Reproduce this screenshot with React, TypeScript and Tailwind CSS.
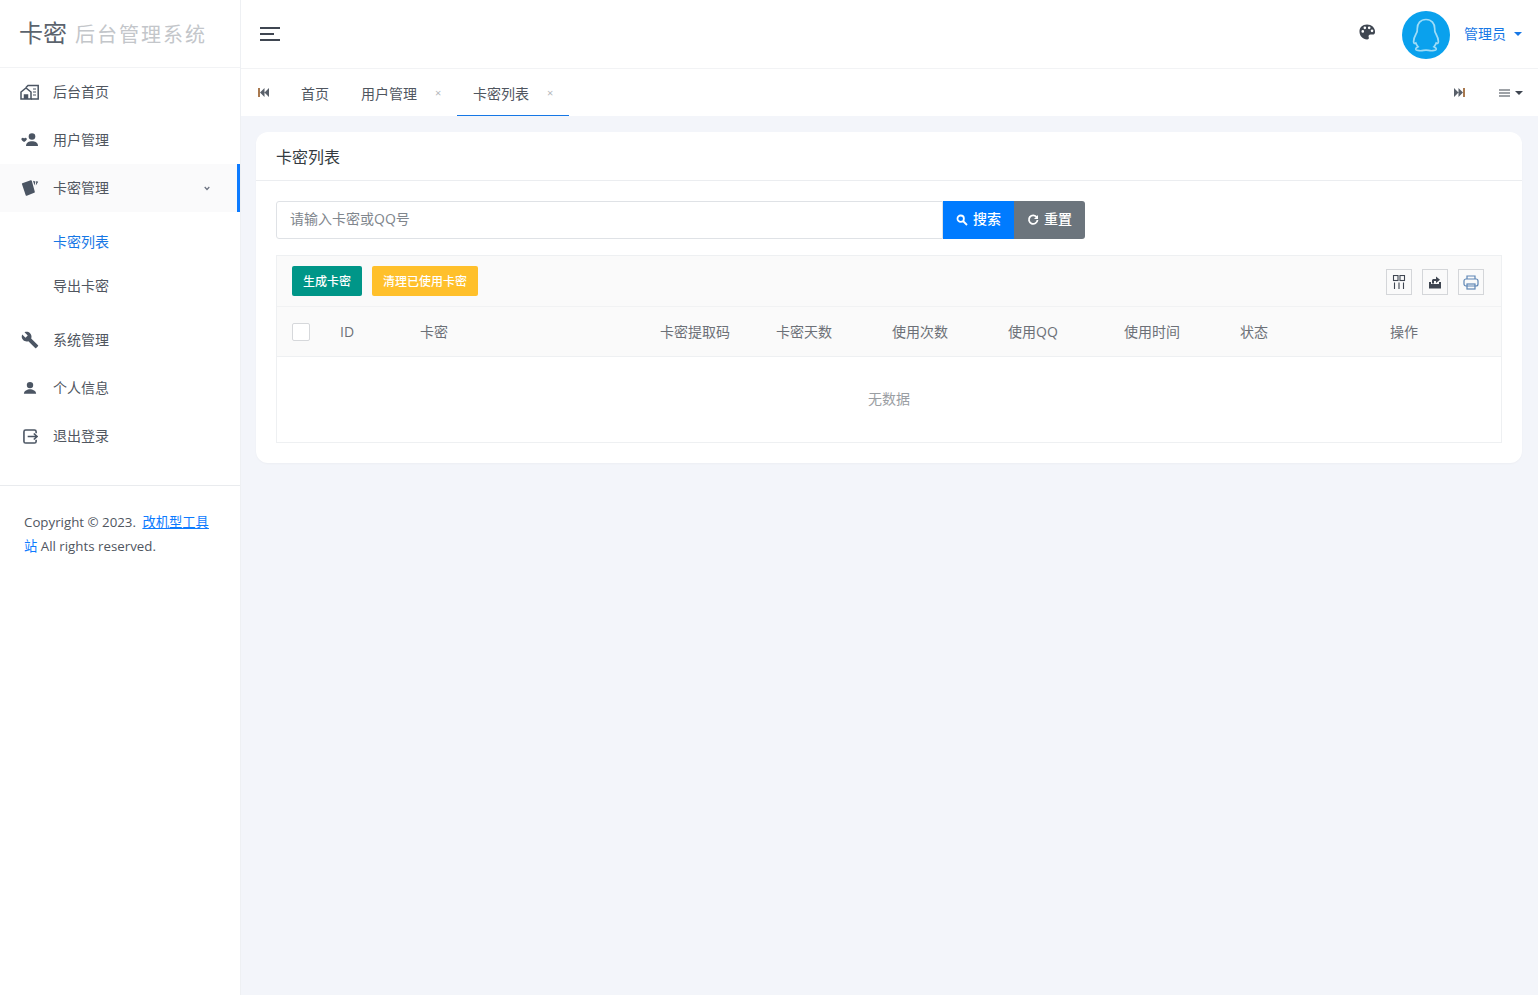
import React from "react";

const font = { fontFamily: '"Open Sans","Noto Sans CJK SC",sans-serif' };

const HomeIcon = () => (
  <svg width="20" height="16" viewBox="0 0 20 16" fill="none" stroke="#4b5563" strokeWidth="1.5">
    <path d="M1 15V8l5-4 5 4v7H1z" />
    <path d="M4.500 15v-4h3v4" fill="#4b5563" />
    <path d="M6 3.500 8 1.500h10.200V15H11" />
    <path d="M13 5h3M13 8h3M13 11h3" strokeWidth="1.200" />
  </svg>
);
const UsersIcon = () => (
  <svg width="18" height="14" viewBox="0 0 18 14" fill="#4b5563">
    <circle cx="11" cy="3.500" r="3.300" />
    <path d="M5 13c0-3.400 3-4.800 6-4.800s6 1.400 6 4.800z" />
    <path d="M0.500 5.500c.6-1 2-1 2.600 0 .6-1 2-1 2.600 0 .5 1-.2 2-2.600 3.600C.7 7.500 0 6.500.5 5.500z" />
  </svg>
);
const CardsIcon = () => (
  <svg width="18" height="16" viewBox="0 0 18 16" fill="#4b5563">
    <path d="M1.300 3.200 9.700 0.300c.5-.2.900 0 1.100.5l3 11c.1.500-.1.900-.6 1l-7.400 2.900c-.5.200-.9 0-1.100-.5L1 4.200c-.1-.5-.2-.8.300-1z" />
    <path d="M12 .8l2.400.7-.9 4zM15.300 1l1.900.8-2.400 3.600z" />
  </svg>
);
const WrenchIcon = () => (
  <svg width="18" height="18" viewBox="0 0 24 24" fill="#4b5563">
    <path d="M22.700 19l-9.100-9.100c.9-2.300.4-5-1.500-6.900-2-2-5-2.400-7.400-1.300L9 6 6 9 1.600 4.700C.4 7.100.9 10.100 2.900 12.100c1.900 1.900 4.600 2.400 6.900 1.500l9.100 9.100c.4.400 1 .4 1.400 0l2.300-2.300c.5-.4.500-1.100.1-1.400z" />
  </svg>
);
const UserIcon = () => (
  <svg width="14" height="14" viewBox="0 0 24 24" fill="#4b5563">
    <circle cx="12" cy="7" r="5.500" />
    <path d="M1.500 22c0-5.500 6-8 10.500-8s10.500 2.500 10.500 8z" />
  </svg>
);
const LogoutIcon = () => (
  <svg width="15" height="15" viewBox="0 0 16 16" fill="none" stroke="#4b5563" strokeWidth="1.700">
    <path d="M14 4.500V2.800C14 1.800 13.200 1 12.200 1H2.800C1.800 1 1 1.800 1 2.800v10.400C1 14.200 1.800 15 2.800 15h9.400c1 0 1.800-.8 1.800-1.800v-1.700" />
    <path d="M5 8h10M11.500 4.800 15 8l-3.500 3.200" />
  </svg>
);
const Palette = () => (
  <svg width="17" height="16" viewBox="0 0 18 16" fill="#3f4651">
    <path fillRule="evenodd" d="M8.500 0.100C3.500 0.100 0.500 3.500 0.500 7.500c0 4.500 3.500 8.400 8 8.400 1.800 0 2.300-1.200 1.800-2.400-.6-1.500.3-2.900 2-2.900h2.300c1.400 0 2.400-1 2.400-2.700 0-4.500-3.700-7.800-8.500-7.800zM4 8.800a1.400 1.400 0 1 1 0-2.800 1.400 1.400 0 0 1 0 2.800zM6.200 5a1.400 1.400 0 1 1 0-2.800 1.400 1.400 0 0 1 0 2.800zM10.800 5a1.400 1.400 0 1 1 0-2.800 1.400 1.400 0 0 1 0 2.800zM13.800 8.200a1.400 1.400 0 1 1 0-2.800 1.400 1.400 0 0 1 0 2.800z" />
  </svg>
);
const QQ = () => (
  <svg width="30" height="34" viewBox="0 0 30 34" fill="none" stroke="#9fdcf7" strokeWidth="1.700">
    <path d="M15 1.500c-5.600 0-8.700 4-8.700 9 0 1.400 0 2.400-.3 3.400-.8 2-3.400 5.400-3.400 9.500 0 2 .9 2.500 2.200 1.600.5 1.600 1.300 2.800 2.300 3.800-2 1-2.800 2-2.100 3 .8 1 5.200 1.200 7.400.6.800-.2 1.400-.3 2.600-.3s1.800.1 2.600.3c2.200.6 6.600.4 7.400-.6.700-1-.1-2-2.100-3 1-1 1.800-2.200 2.300-3.800 1.300.9 2.200.4 2.200-1.600 0-4.100-2.600-7.500-3.400-9.500-.3-1-.3-2-.3-3.400 0-5-3.100-9-8.700-9z" />
  </svg>
);
const SkipIcon = ({ right }: { right?: boolean }) => (
  <svg width="11" height="9" viewBox="0 0 11 9" fill="#59606a" style={right ? { transform: "scaleX(-1)" } : undefined}>
    <rect x="0" y="0" width="2" height="9" fill="#a9794f" />
    <path d="M6.500 0v9L2 4.500zM11 0v9L6.500 4.500z" />
  </svg>
);
const Caret = ({ color = "#1677e5" }: { color?: string }) => (
  <span className="inline-block h-0 w-0 border-x-[4px] border-t-[4px] border-x-transparent" style={{ borderTopColor: color }} />
);

const Item = ({ icon, label, active, tall }: { icon: React.ReactNode; label: string; active?: boolean; tall?: boolean }) => (
  <div className={`relative flex items-center pl-5 pr-[30px] ${tall ? "h-[49px]" : "h-12"} ${active ? "bg-[#fafafb]" : ""}`}>
    <span className="flex w-5 justify-center pb-[1px]">{icon}</span>
    <span className="ml-[13px] pb-[2px] text-[14px] text-[#50565f]">{label}</span>
    {active && (
      <>
        <svg className="ml-auto" width="6" height="5" viewBox="0 0 6 5" fill="none" stroke="#6b7280" strokeWidth="1.200"><path d="M.7 1l2.300 2.500L5.300 1" /></svg>
        <span className="absolute right-0 top-0 h-12 w-[3px] bg-[#0d7bff]" />
      </>
    )}
  </div>
);

const Sidebar = () => (
  <aside className="w-[241px] shrink-0 border-r border-[#eef0f3] bg-white">
    <div className="flex h-[68px] items-center border-b border-[#f2f3f5] pl-[19px]">
      <span className="pb-[2px] text-[24px] text-[#5b636d]">卡密</span>
      <span className="ml-[8px] pt-[3px] text-[20px] tracking-[2px] text-[#c3c6ca]">后台管理系统</span>
    </div>
    <Item icon={<HomeIcon />} label="后台首页" />
    <Item icon={<UsersIcon />} label="用户管理" />
    <Item icon={<CardsIcon />} label="卡密管理" active />
    <div className="py-2">
      <div className="flex h-11 items-center pb-[2px] pl-[53px] text-[14px] text-[#1677e5]">卡密列表</div>
      <div className="flex h-11 items-center pb-[2px] pl-[53px] text-[14px] text-[#50565f]">导出卡密</div>
    </div>
    <Item icon={<WrenchIcon />} label="系统管理" />
    <Item icon={<UserIcon />} label="个人信息" />
    <Item icon={<LogoutIcon />} label="退出登录" tall />
    <div className="mt-6 border-t border-[#e9ebee] px-6 pt-6 text-[13.3px] leading-6 text-[#50565f]">
      Copyright © 2023. <a className="ml-[3px] text-[#0d7bff] underline" href="#">改机型工具</a><a className="text-[#0d7bff]" href="#">站</a> All rights reserved.
    </div>
  </aside>
);

const Header = () => (
  <header className="flex h-[69px] items-center border-b border-[#f2f3f5] bg-white pl-[19px] pr-4">
    <svg width="22" height="16" viewBox="0 0 22 16" stroke="#3f4651" strokeWidth="2"><path d="M0 2h20M0 8h14M0 14h20" /></svg>
    <div className="ml-auto mb-1"><Palette /></div>
    <div className="ml-[26px] mt-[2px] flex h-12 w-12 items-center justify-center rounded-full bg-[#0aa1ed]"><QQ /></div>
    <span className="ml-[14px] pb-[2px] text-[14px] text-[#1677e5]">管理员</span>
    <span className="ml-2 flex"><Caret /></span>
  </header>
);

const Tab = ({ label, close, active }: { label: string; close?: boolean; active?: boolean }) => (
  <div className={`flex h-[47px] items-center border-b pt-[2px] ${close ? "w-28 pl-4" : "w-[60px] justify-center"} ${active ? "border-[#1677e5]" : "border-transparent"}`}>
    <span className="text-[14px] text-[#50565f]">{label}</span>
    {close && <span className="ml-[18px] text-[11px] text-[#b4b7bb]">×</span>}
  </div>
);

const Tabs = () => (
  <div className="flex h-[47px] items-center bg-white pl-[17px] pr-[15px]">
    <SkipIcon />
    <div className="ml-4 flex">
      <Tab label="首页" />
      <Tab label="用户管理" close />
      <Tab label="卡密列表" close active />
    </div>
    <div className="ml-auto"><SkipIcon right /></div>
    <svg className="ml-[34px]" width="12" height="8" viewBox="0 0 12 8" stroke="#3f4651" strokeWidth="1.200"><path d="M0 1h11M0 4h11M0 7h11" /></svg>
    <span className="ml-[4px] flex"><Caret color="#3f4651" /></span>
  </div>
);

const TH = ({ label, w }: { label: string; w: string }) => (
  <div className={`${w} text-[14px] text-[#6c7077]`}>{label}</div>
);

const ToolBtn = ({ children }: { children: React.ReactNode }) => (
  <div className="flex h-[26px] w-[26px] items-center justify-center border border-[#d4d6d9]">{children}</div>
);

const Card = () => (
  <div className="ml-[15px] mr-4 mt-4 rounded-xl bg-white shadow-[0_1px_2px_rgba(0,0,0,0.03)]">
    <div className="flex h-[49px] items-center border-b border-[#ebedf0] px-5 pt-[2px] text-[16px] text-[#343a40]">卡密列表</div>
    <div className="p-5">
      <div className="flex h-[38px] w-[809px]">
        <div className="flex flex-1 items-center rounded-l-[3px] border border-[#dfe2e6] pb-[3px] pl-[13px] text-[14px] text-[#80868d]">请输入卡密或QQ号</div>
        <div className="flex w-[71px] items-center justify-center gap-[5px] bg-[#007bff] text-[14px] font-medium text-white">
          <svg width="12" height="12" viewBox="0 0 12 12" fill="none" stroke="#fff" strokeWidth="1.800"><circle cx="4.700" cy="4.700" r="3.200" /><path d="M7 7l4 4" /></svg>
          <span className="pb-[3px]">搜索</span>
        </div>
        <div className="flex w-[71px] items-center justify-center gap-[5px] rounded-r-[3px] bg-[#6c757d] text-[14px] font-medium text-white">
          <svg width="12" height="12" viewBox="0 0 12 12" fill="none" stroke="#fff" strokeWidth="1.800"><path d="M9.800 3.200A4.300 4.300 0 1 0 10.500 6" /><path d="M11 1v4H7z" fill="#fff" stroke="none" /></svg>
          <span className="pb-[3px]">重置</span>
        </div>
      </div>
      <div className="mt-4 border border-[#eef0f2]">
        <div className="flex h-[51px] items-center border-b border-[#f1f2f3] bg-[#fafafa] pl-[15px] pr-[17px]">
          <div className="flex h-[30px] w-[70px] items-center justify-center rounded-[2px] bg-[#009688] pt-[1px] text-[12px] font-medium text-white">生成卡密</div>
          <div className="ml-[10px] flex h-[30px] w-[106px] items-center justify-center rounded-[2px] bg-[#ffc02b] pt-[1px] text-[12px] font-medium text-white">清理已使用卡密</div>
          <div className="ml-auto mt-[2px] flex gap-[10px]">
            <ToolBtn>
              <svg width="14" height="14" viewBox="0 0 14 14" fill="none" stroke="#3f4651" strokeWidth="1.100"><rect x="1.500" y="0.500" width="4.500" height="5" /><rect x="8" y="0.500" width="4.500" height="5" /><path d="M2.500 7.500v6.500M7 7.500v6.500M11.500 7.500v6.500" /></svg>
            </ToolBtn>
            <ToolBtn>
              <svg width="14" height="14" viewBox="0 0 14 14" fill="#3f4651"><path d="M1 7h2v2h8V7h2v6.500H1z" /><path d="M4 8.500V5.500c0-1 .8-1.500 1.800-1.500H8V1.500L12 4.800 8 8V6H6v2.500z" /></svg>
            </ToolBtn>
            <ToolBtn>
              <svg width="16" height="15" viewBox="0 0 16 15" fill="none" stroke="#5e86b5" strokeWidth="1.200"><path d="M4 4V1h8v3" /><rect x="1" y="4" width="14" height="7" rx="2" /><rect x="4" y="9" width="8" height="5" /></svg>
            </ToolBtn>
          </div>
        </div>
        <div className="flex h-[50px] items-center border-b border-[#eef0f2] bg-[#fafafa] pl-[15px] text-left">
          <span className="mt-[1px] h-[18px] w-[18px] rounded-[2px] border border-[#d6d8db] bg-white" />
          <div className="w-[30px]" />
          <TH label="ID" w="w-[80px]" />
          <TH label="卡密" w="w-[240px]" />
          <TH label="卡密提取码" w="w-[116px]" />
          <TH label="卡密天数" w="w-[116px]" />
          <TH label="使用次数" w="w-[116px]" />
          <TH label="使用QQ" w="w-[116px]" />
          <TH label="使用时间" w="w-[116px]" />
          <TH label="状态" w="w-[150px]" />
          <TH label="操作" w="w-[40px]" />
        </div>
        <div className="flex h-[85px] items-center justify-center pb-[2px] text-[14px] text-[#9a9ea3]">无数据</div>
      </div>
    </div>
  </div>
);

export default function App() {
  return (
    <div className="flex h-[995px] w-full overflow-hidden bg-[#f3f5fa]" style={font}>
      <Sidebar />
      <main className="min-w-0 flex-1">
        <Header />
        <Tabs />
        <Card />
      </main>
    </div>
  );
}
